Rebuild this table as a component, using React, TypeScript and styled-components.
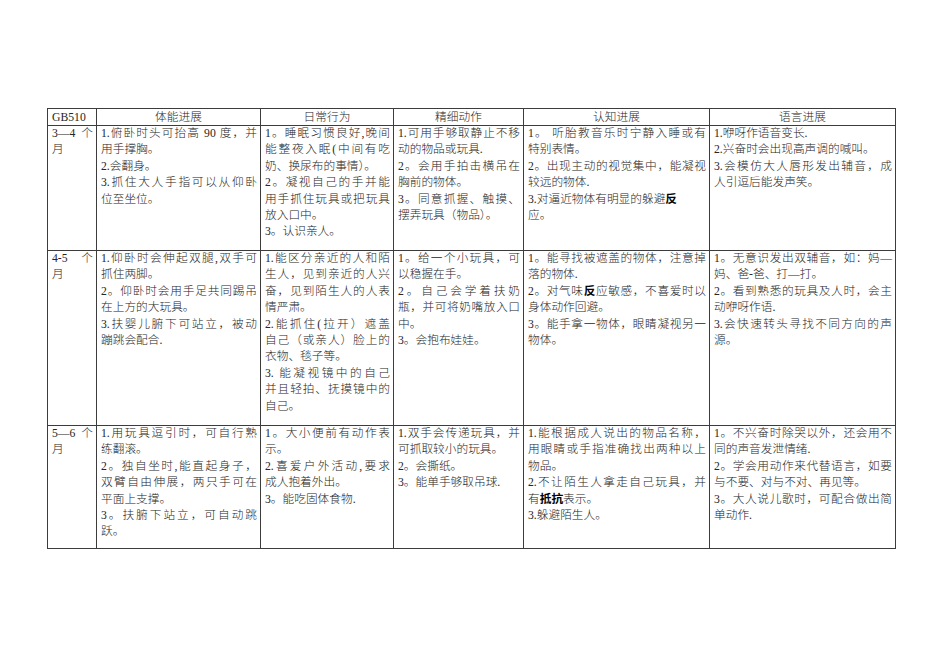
import React from 'react';
import styled, { createGlobalStyle } from 'styled-components';

const GlobalStyle = createGlobalStyle`
  html, body {
    margin: 0;
    padding: 0;
    background: #ffffff;
  }
  body {
    font-family: "Liberation Serif", "Noto Sans CJK SC", serif;
    color: #262626;
  }
`;

const Page = styled.div`
  width: 950px;
  height: 672px;
  box-sizing: border-box;
  padding: 108px 0 0 47px;
`;

const Table = styled.table`
  border-collapse: collapse;
  table-layout: fixed;
  width: 848px;
  font-size: 11.7px;
  font-weight: 300;
`;

const Row = styled.tr<{ $h: number }>`
  height: ${(p) => p.$h}px;
`;

const HeadCell = styled.th<{ $left?: boolean }>`
  border: 1px solid #3c3c3c;
  padding: 0 4px;
  font-weight: 300;
  line-height: 15px;
  text-align: ${(p) => (p.$left ? 'left' : 'center')};
  vertical-align: middle;
  white-space: nowrap;
`;

const Cell = styled.td`
  border: 1px solid #3c3c3c;
  padding: 0 3px 0 4px;
  vertical-align: top;
`;

const Line = styled.div<{ $fill?: boolean }>`
  line-height: 16.4px;
  white-space: nowrap;
  text-align: ${(p) => (p.$fill ? 'justify' : 'left')};
  text-align-last: ${(p) => (p.$fill ? 'justify' : 'left')};
`;

const Strong = styled.b`
  font-weight: 700;
  color: #000000;
`;

// each cell: paragraphs, each paragraph split into its printed lines by "\n";
// a line ending in "|" keeps its natural width instead of being justified
type CellText = string[];

interface RowData {
  age: string;
  cells: CellText[];
  height: number;
}

const heads = ['体能进展', '日常行为', '精细动作', '认知进展', '语言进展'];
const widths = [49, 164, 133, 130, 186, 186];

const rows: RowData[] = [
  {
    age: '3—4 个\n月',
    height: 125,
    cells: [
      ['1.俯卧时头可抬高 90 度，并\n用手撑胸。', '2.会翻身。', '3.抓住大人手指可以从仰卧\n位至坐位。'],
      ['1。睡眠习惯良好,晚间\n能整夜入眠(中间有吃\n奶、换尿布的事情）。', '2。凝视自己的手并能\n用手抓住玩具或把玩具\n放入口中。', '3。认识亲人。'],
      ['1.可用手够取静止不移\n动的物品或玩具.', '2。会用手拍击横吊在\n胸前的物体。', '3。同意抓握、触摸、\n摆弄玩具（物品）。'],
      ['1。 听胎教音乐时宁静入睡或有\n特别表情。', '2。出现主动的视觉集中，能凝视\n较远的物体.', '3.对逼近物体有明显的躲避**反**|\n应。'],
      ['1.咿呀作语音变长.', '2.兴奋时会出现高声调的喊叫。', '3.会模仿大人唇形发出辅音，成\n人引逗后能发声笑。'],
    ],
  },
  {
    age: '4-5  个\n月',
    height: 175,
    cells: [
      ['1.仰卧时会伸起双腿,双手可\n抓住两脚。', '2。仰卧时会用手足共同踢吊\n在上方的大玩具。', '3.扶婴儿腑下可站立，被动\n蹦跳会配合.'],
      ['1.能区分亲近的人和陌\n生人，见到亲近的人兴\n奋，见到陌生人的人表\n情严肃。', '2.能抓住(拉开）遮盖\n自己（或亲人）脸上的\n衣物、毯子等。', '3. 能凝视镜中的自己\n并且轻拍、抚摸镜中的\n自己。'],
      ['1。给一个小玩具，可\n以稳握在手。', '2。自己会学着扶奶\n瓶，并可将奶嘴放入口\n中。', '3。会抱布娃娃。'],
      ['1。能寻找被遮盖的物体，注意掉\n落的物体.', '2。对气味**反**应敏感，不喜爱时以\n身体动作回避。', '3。能手拿一物体，眼睛凝视另一\n物体。'],
      ['1。无意识发出双辅音，如：妈—\n妈、爸-爸、打—打。', '2。看到熟悉的玩具及人时，会主\n动咿呀作语.', '3.会快速转头寻找不同方向的声\n源。'],
    ],
  },
  {
    age: '5—6 个\n月',
    height: 123,
    cells: [
      ['1.用玩具逗引时，可自行熟\n练翻滚。', '2。独自坐时,能直起身子，\n双臂自由伸展，两只手可在\n平面上支撑。', '3。扶腑下站立，可自动跳\n跃。'],
      ['1。大小便前有动作表\n示。', '2.喜爱户外活动,要求\n成人抱着外出。', '3。能吃固体食物.'],
      ['1.双手会传递玩具，并\n可抓取较小的玩具。', '2。会撕纸。', '3。能单手够取吊球.'],
      ['1.能根据成人说出的物品名称，\n用眼睛或手指准确找出两种以上\n物品。', '2.不让陌生人拿走自己玩具，并\n有**抵抗**表示。', '3.躲避陌生人。'],
      ['1。不兴奋时除哭以外，还会用不\n同的声音发泄情绪.', '2。学会用动作来代替语言，如要\n与不要、对与不对、再见等。', '3。大人说儿歌时，可配合做出简\n单动作.'],
    ],
  },
];

const Rich = ({ text }: { text: string }) => (
  <>
    {text.split('**').map((part, i) =>
      i % 2 === 1 ? <Strong key={i}>{part}</Strong> : <React.Fragment key={i}>{part}</React.Fragment>
    )}
  </>
);

const Paragraph = ({ text }: { text: string }) => {
  const lines = text.split('\n');
  return (
    <>
      {lines.map((line, i) => {
        const ragged = line.endsWith('|');
        return (
          <Line key={i} $fill={!ragged && i < lines.length - 1}>
            <Rich text={ragged ? line.slice(0, -1) : line} />
          </Line>
        );
      })}
    </>
  );
};

export default function App() {
  return (
    <Page>
      <GlobalStyle />
      <Table>
        <colgroup>
          {widths.map((w, i) => (
            <col key={i} style={{ width: w }} />
          ))}
        </colgroup>
        <thead>
          <Row $h={17}>
            <HeadCell $left>GB510</HeadCell>
            {heads.map((h) => (
              <HeadCell key={h}>{h}</HeadCell>
            ))}
          </Row>
        </thead>
        <tbody>
          {rows.map((row) => (
            <Row key={row.age} $h={row.height}>
              <Cell>
                <Paragraph text={row.age} />
              </Cell>
              {row.cells.map((cell, ci) => (
                <Cell key={ci}>
                  {cell.map((p, pi) => (
                    <Paragraph key={pi} text={p} />
                  ))}
                </Cell>
              ))}
            </Row>
          ))}
        </tbody>
      </Table>
    </Page>
  );
}
